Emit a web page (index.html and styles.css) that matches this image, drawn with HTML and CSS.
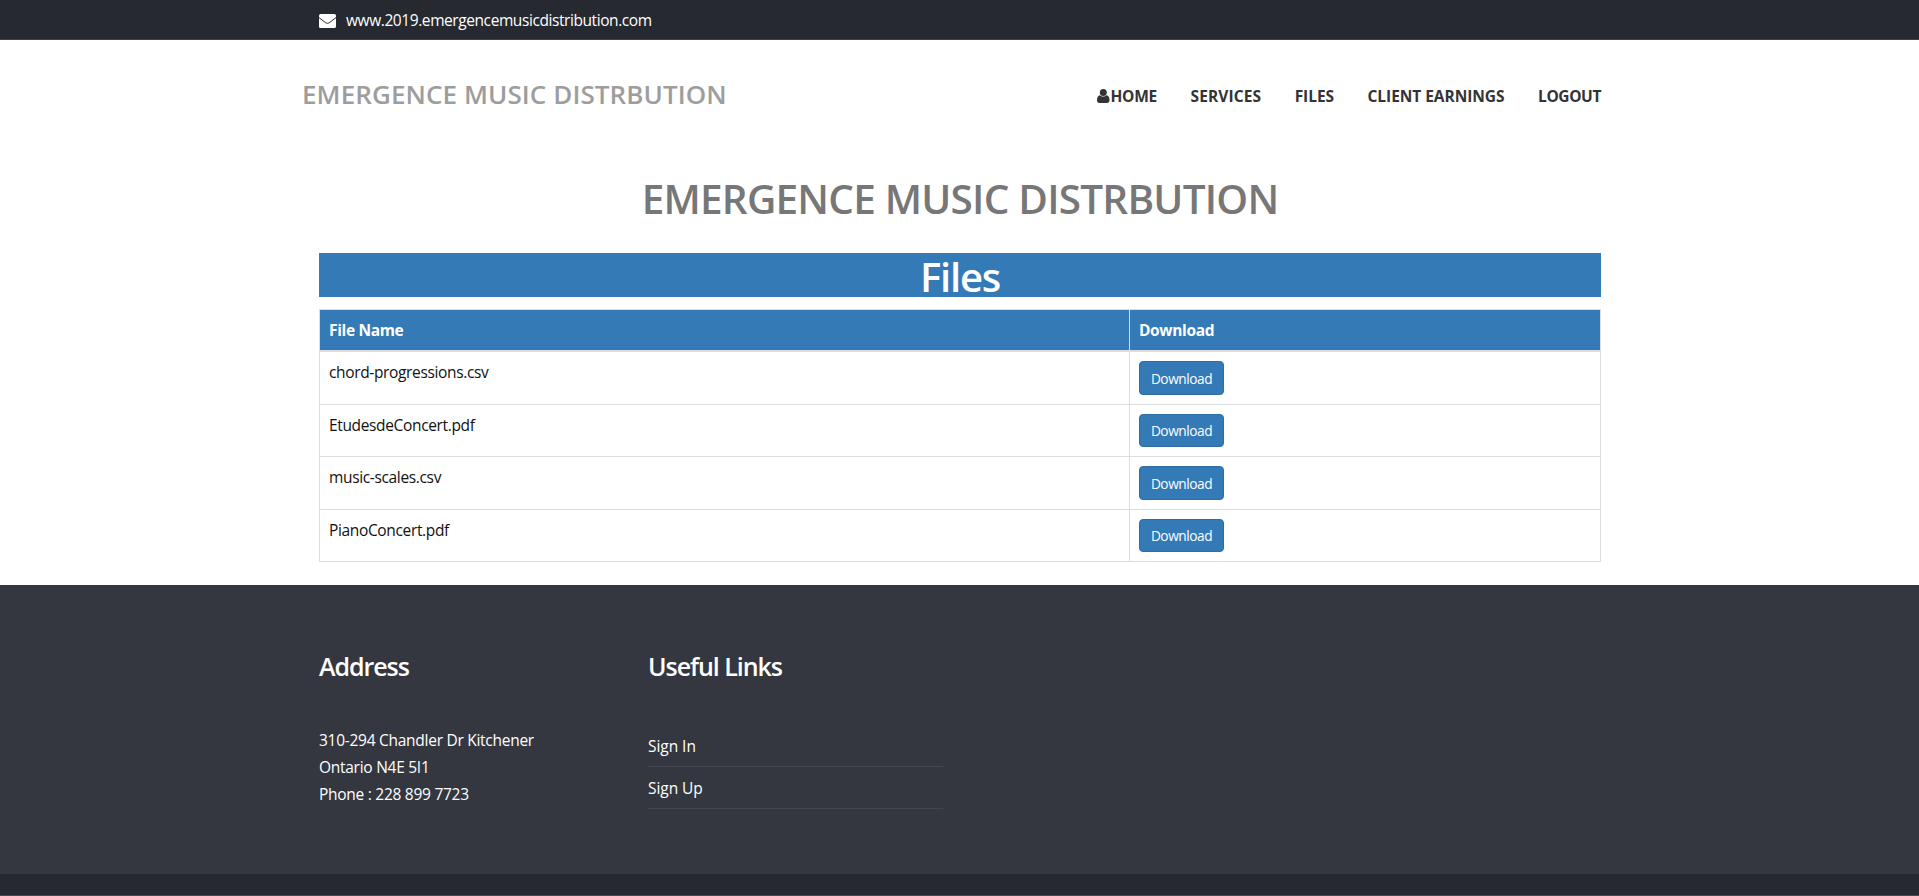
FILE: index.html
```
<!DOCTYPE html>
<html lang="en">
<head>
<meta charset="utf-8">
<title>Emergence Music Distrbution - Files</title>
<link rel="stylesheet" href="styles.css">
</head>
<body>
<div class="topbar">
  <div class="container topbar-inner">
    <svg class="icon-mail" viewBox="0 0 17 14"><rect x="0" y="0" width="17" height="14" rx="1.6" fill="#fff"/><path d="M0 3.6 6.6 8.7Q8.5 10 10.4 8.7L17 3.6" fill="none" stroke="#272931" stroke-width="1"/></svg>
    <span class="site">www.2019.emergencemusicdistribution.com</span>
  </div>
</div>
<header class="container header">
  <a class="logo">EMERGENCE MUSIC DISTRBUTION</a>
  <nav class="nav">
    <a class="home"><svg class="icon-user" viewBox="0 0 13 14"><path d="M3 6.3C1 6.6 0 8.300 0 11.200 0 13 1 14 2.600 14h7.300c1.600 0 2.600-1 2.600-2.800 0-2.900-1-4.600-3-4.900-.8.800-1.900 1.200-3.200 1.200S3.800 7.100 3 6.300z"/><circle cx="6.300" cy="3.500" r="3.500"/></svg>HOME</a>
    <a class="services">SERVICES</a>
    <a class="files">FILES</a>
    <a class="earnings">CLIENT EARNINGS</a>
    <a class="logout">LOGOUT</a>
  </nav>
</header>
<main class="container">
  <h1 class="title">EMERGENCE MUSIC DISTRBUTION</h1>
  <h2 class="banner">Files</h2>
  <div class="table">
    <div class="row head"><div class="cell">File Name</div><div class="cell">Download</div></div>
    <div class="row tall"><div class="cell">chord-progressions.csv</div><div class="cell"><a class="btn">Download</a></div></div>
    <div class="row"><div class="cell">EtudesdeConcert.pdf</div><div class="cell"><a class="btn short">Download</a></div></div>
    <div class="row tall"><div class="cell">music-scales.csv</div><div class="cell"><a class="btn">Download</a></div></div>
    <div class="row"><div class="cell">PianoConcert.pdf</div><div class="cell"><a class="btn short">Download</a></div></div>
  </div>
</main>
<footer class="footer">
  <div class="container footer-cols">
    <section>
      <h3 class="foot-title">Address</h3>
      <p class="address">310-294 Chandler Dr Kitchener<br>Ontario N4E 5I1<br>Phone : 228 899 7723</p>
    </section>
    <section>
      <h3 class="foot-title">Useful Links</h3>
      <ul class="links"><li>Sign In</li><li>Sign Up</li></ul>
    </section>
  </div>
</footer>
<div class="bottom"></div>
</body>
</html>
```
FILE: styles.css
```
* { box-sizing: border-box; }
body {
  margin: 0;
  background: #fff;
  color: #111;
  font: 15.5px/26px "Open Sans", "Noto Sans", sans-serif;
  letter-spacing: -0.35px;
  height: 896px;
  overflow: hidden;
}
.container { width: 1282px; margin: 0 0 0 319px; }

.topbar { height: 40px; background: #272931; border-bottom: 1px solid #3f4148; color: #fff; }
.topbar-inner { display: flex; align-items: center; height: 40px; }
.icon-mail { width: 17px; height: 14px; margin: 1px 10px 0 0; }
.site { letter-spacing: -0.42px; }

.header { display: flex; justify-content: space-between; align-items: flex-start; height: 126px; padding-top: 41px; }
.logo { margin-left: -17px; color: #9d9d9d; font-size: 26px; font-weight: 600; line-height: 26px; letter-spacing: 0.09px; }
.nav { display: flex; line-height: 30px; font-weight: 700; color: #333; white-space: nowrap; }
.nav a { margin-left: 33.5px; letter-spacing: -0.05px; }
.nav .home { display: flex; align-items: center; margin: 0; letter-spacing: -0.2px; }
.nav .services { letter-spacing: 0.1px; }
.nav .logout { letter-spacing: -0.4px; }
.icon-user { width: 13px; height: 14px; fill: #333; }

.title {
  margin: 0;
  height: 87px;
  padding-top: 13px;
  font-size: 40.5px;
  line-height: 40px;
  font-weight: 600;
  letter-spacing: -0.78px;
  color: #777;
  text-align: center;
}
.banner {
  margin: 0 0 12px;
  height: 44px;
  padding-top: 4px;
  background: #337ab7;
  color: #fff;
  font-size: 40px;
  line-height: 40px;
  font-weight: 600;
  letter-spacing: -1.2px;
  text-align: center;
}

.table { border: 1px solid #ddd; border-bottom: 0; }
.row { display: grid; grid-template-columns: 809px 1fr; height: 52px; border-bottom: 1px solid #ddd; }
.row.tall { height: 53px; }
.row.head { height: 42px; border-bottom-width: 2px; background: #337ab7; color: #fff; font-weight: 700; }
.cell { padding: 7px 9px; }
.cell + .cell { padding-top: 9px; border-left: 1px solid #ddd; }
.head .cell, .head .cell + .cell { padding-top: 7px; }
.btn {
  display: block;
  width: 85px;
  height: 34px;
  border: 1px solid #2e6da4;
  border-radius: 4px;
  background: #337ab7;
  color: #fff;
  font-size: 13.7px;
  line-height: 33px;
  letter-spacing: -0.45px;
  text-align: center;
}
.btn.short { height: 33px; line-height: 31px; }

.footer { margin-top: 23px; height: 289px; background: #34373f; color: #fff; }
.footer-cols { display: grid; grid-template-columns: 295px 295px; column-gap: 34px; padding-top: 66px; }
.foot-title { margin: 0 0 46px; font-size: 25px; line-height: 30px; font-weight: 600; letter-spacing: -1.05px; }
.address { margin: 0; line-height: 27px; letter-spacing: -0.27px; }
.links { margin: -2px 0 0; padding: 0; list-style: none; }
.links li { height: 42px; border-bottom: 1px solid #41464f; line-height: 42px; letter-spacing: -0.05px; }
.bottom { height: 22px; background: #272931; border-bottom: 1px solid #51454d; }
```
